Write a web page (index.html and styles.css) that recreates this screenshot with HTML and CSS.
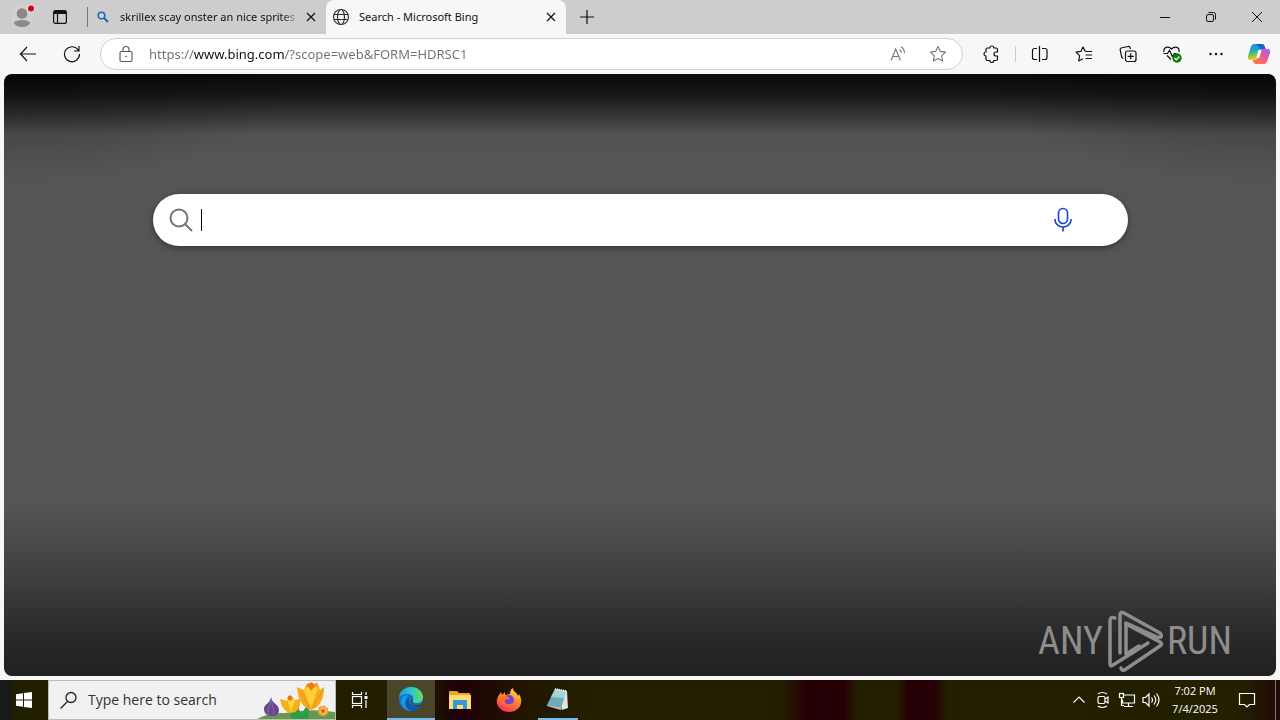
FILE: index.html
```html
<!DOCTYPE html>
<html lang="en">
<head>
<meta charset="utf-8">
<meta name="viewport" content="width=device-width, initial-scale=1">
<title>Search - Microsoft Bing</title>
<link rel="stylesheet" href="styles.css">
</head>
<body>
<div class="desktop">
  <header class="tabstrip">
    <button class="strip-btn profile" aria-label="Profile">
      <svg width="26" height="26" viewBox="0 0 26 26"><circle cx="13" cy="14" r="11" fill="#d3d1cf"/><circle cx="13" cy="10.500" r="5.300" fill="#8b8885"/><path d="M5 19q8-4 16 0c0 3-4 5-8 5s-8-2-8-5z" fill="#8b8885"/><circle cx="22" cy="5.500" r="4" fill="#e9dada"/><circle cx="22" cy="5.500" r="3" fill="#d0021b"/></svg>
    </button>
    <button class="strip-btn" aria-label="Tab actions">
      <svg width="16" height="16" viewBox="0 0 16 16" fill="none" stroke="#111" stroke-width="1.200"><rect x="1.600" y="1.600" width="12.800" height="12.800" rx="2"/><path d="M5.500 4.500v10"/><path d="M2 3.500h12" stroke-width="3"/></svg>
    </button>
    <span class="strip-sep"></span>
    <div class="tabs">
      <div class="tab">
        <svg class="tab-icon" width="16" height="16" viewBox="0 0 16 16" fill="none" stroke="#1769b5"><circle cx="6.500" cy="6.500" r="3.300" stroke-width="1.500"/><path d="M9 9l4 4" stroke-width="2"/></svg>
        <span class="tab-title fade">skrillex scay onster an nice sprites</span>
        <button class="tab-close" aria-label="Close tab"><svg width="10" height="10" viewBox="0 0 10 10" stroke="#111" stroke-width="1.200"><path d="M1 1l8 8M9 1l-8 8"/></svg></button>
      </div>
      <div class="tab active">
        <svg class="tab-icon" width="18" height="18" viewBox="0 0 18 18" fill="none" stroke="#333" stroke-width="1.200"><circle cx="9" cy="9" r="7.500"/><ellipse cx="9" cy="9" rx="3.500" ry="7.500"/><path d="M2 6.500h14M2 11.500h14"/></svg>
        <span class="tab-title">Search - Microsoft Bing</span>
        <button class="tab-close" aria-label="Close tab"><svg width="10" height="10" viewBox="0 0 10 10" stroke="#111" stroke-width="1.200"><path d="M1 1l8 8M9 1l-8 8"/></svg></button>
      </div>
    </div>
    <button class="new-tab" aria-label="New tab"><svg width="14" height="14" viewBox="0 0 14 14" stroke="#111" stroke-width="1.200"><path d="M7 0v14M0 7h14"/></svg></button>
    <div class="window-controls">
      <button aria-label="Minimize"><svg width="10" height="10" viewBox="0 0 10 10" stroke="#111"><path d="M0 5.500h10"/></svg></button>
      <button aria-label="Restore"><svg width="10" height="10" viewBox="0 0 10 10" fill="none" stroke="#111"><rect x=".5" y="2.500" width="7" height="7" rx="1.500"/><path d="M2.500 .5h5a2 2 0 0 1 2 2v5"/></svg></button>
      <button aria-label="Close"><svg width="10" height="10" viewBox="0 0 10 10" stroke="#111"><path d="M0 0l10 10M10 0L0 10"/></svg></button>
    </div>
  </header>

  <nav class="toolbar">
    <button class="tool" aria-label="Back"><svg width="18" height="18" viewBox="0 0 18 18" fill="none" stroke="#111" stroke-width="1.200"><path d="M8 2L1.500 9 8 16M1.500 9H17"/></svg></button>
    <button class="tool" aria-label="Refresh"><svg width="18" height="18" viewBox="0 0 18 18" fill="none" stroke="#111" stroke-width="1.200"><path d="M15.500 5.500A7.500 7.500 0 1 0 16.500 9M16 1v5h-5"/></svg></button>
    <div class="address">
      <svg width="16" height="18" viewBox="0 0 16 18" fill="none" stroke="#555" stroke-width="1.100"><rect x="2" y="6.500" width="12" height="10" rx="1.500"/><path d="M5 6.500V4.500a3 3 0 0 1 6 0v2"/><circle cx="8" cy="11.500" r=".8" fill="#555" stroke="none"/></svg>
      <input class="url" type="text" aria-label="Address bar" value="https://www.bing.com/?scope=web&amp;FORM=HDRSC1" spellcheck="false">
      <button aria-label="Read aloud"><svg width="18" height="18" viewBox="0 0 18 18" fill="none" stroke="#777" stroke-width="1.100"><path d="M2 15.500L6.700 4l4.800 11.500M3.600 11.500h6.300M10.500 4.500c1.200.8 1.800 2 1.800 3.500M12.200 1.800c2.300 1.500 3.300 3.700 3.200 6.500"/></svg></button>
      <button aria-label="Add to favorites"><svg width="18" height="18" viewBox="0 0 18 18" fill="none" stroke="#777" stroke-width="1.100" stroke-linejoin="round"><path d="M9 1.500l2.300 4.900 5.200.7-3.800 3.700.9 5.300L9 13.600l-4.600 2.500.9-5.300L1.500 7.100l5.200-.7z"/></svg></button>
    </div>
    <button class="tool" aria-label="Extensions"><svg width="18" height="18" viewBox="0 0 18 18" fill="none" stroke="#111" stroke-width="1.200" stroke-linejoin="round"><path d="M5.500 3h2.300a2 2 0 0 1 4 0H14q1.500 0 1.500 1.500V7H14a2 2 0 0 0 0 4h1.500v3q0 1.500-1.500 1.500h-2.200a2 2 0 0 1-4 0H5.500Q4 15.500 4 14v-3a2 2 0 0 1 0-4V4.500Q4 3 5.500 3z"/></svg></button>
    <span class="tool-sep"></span>
    <button class="tool" aria-label="Split screen"><svg width="18" height="18" viewBox="0 0 18 18" fill="none" stroke="#111" stroke-width="1.200"><path d="M8.500 1v16M6 3.500H3.500a2 2 0 0 0-2 2v7a2 2 0 0 0 2 2H6M11 3.500h3a2 2 0 0 1 2 2v7a2 2 0 0 1-2 2h-3"/></svg></button>
    <button class="tool" aria-label="Favorites"><svg width="18" height="18" viewBox="0 0 18 18" fill="none" stroke="#111" stroke-width="1.200" stroke-linejoin="round"><path d="M11 6.500L10 6 8 2 6 6.300l-5 .8 3.600 3.600-.9 5.300L8 13.700M11 6.500h6M10.500 10H17M10.500 13.500H17"/></svg></button>
    <button class="tool" aria-label="Collections"><svg width="18" height="18" viewBox="0 0 18 18" fill="none" stroke="#111" stroke-width="1.200" stroke-linejoin="round"><path d="M4.500 13.500Q3 13 2.500 11.500L1.200 4.800q-.3-1.500 1-1.800L9 1.500q1.500-.3 2 1l.5 1.500"/><rect x="6.500" y="6" width="10.500" height="10.500" rx="2"/><path d="M11.700 8.300v6M8.700 11.300h6"/></svg></button>
    <button class="tool" aria-label="Browser essentials"><svg width="20" height="20" viewBox="0 0 20 20" fill="none" stroke="#111" stroke-width="1.200" stroke-linejoin="round"><path d="M2 8C1 3 6.500 1.500 9.500 5 12.500 1.500 18 3 17 8M9 15.500l-4-4M1.500 9.500h4l2-3.300 3 6.500 1.800-3.200h2"/><circle cx="15" cy="14" r="4.700" fill="#107c10" stroke="none"/><path d="M12.500 14l1.800 1.800 3-3.300" stroke="#fff"/></svg></button>
    <button class="tool" aria-label="Settings and more"><svg width="16" height="16" viewBox="0 0 16 16" fill="#111"><circle cx="2.500" cy="8" r="1.200"/><circle cx="8" cy="8" r="1.200"/><circle cx="13.500" cy="8" r="1.200"/></svg></button>
    <button class="tool copilot" aria-label="Copilot"><svg width="24" height="24" viewBox="0 0 24 24">
      <defs><linearGradient id="cpA" x1="0" y1="0" x2=".2" y2="1"><stop offset="0" stop-color="#1687e8"/><stop offset=".45" stop-color="#26a9c7"/><stop offset=".75" stop-color="#8ac63f"/><stop offset="1" stop-color="#ffc928"/></linearGradient><linearGradient id="cpB" x1=".8" y1="0" x2=".2" y2="1"><stop offset="0" stop-color="#a35df1"/><stop offset=".5" stop-color="#ef5b91"/><stop offset="1" stop-color="#ff7a3c"/></linearGradient></defs>
      <path d="M7 2h8q2 0 2.500 2l1 3h-3q-2 0-2.500 2l-2 7q-.8 2-3 2H4q-4 0-3-4L4 4.500Q5 2 7 2z" fill="url(#cpA)"/><path d="M17 22H9q-2 0-2.500-2l-1-2H8q2 0 2.800-2l2.200-7q.6-2 2.500-2H20q4 0 3 4l-3 8.500Q19 22 17 22z" fill="url(#cpB)"/><path d="M9 2h6q2 0 2.500 2l1 3h-4q-2 0-2.500-2z" fill="#1762c9"/><path d="M11.500 8h3l-2.200 8h-3z" fill="#fff"/></svg></button>
  </nav>

  <main class="page">
    <form class="searchbox" role="search">
      <svg class="search-icon" width="26" height="26" viewBox="0 0 26 26" fill="none" stroke="#767676" stroke-width="2"><circle cx="11" cy="11" r="8.500"/><path d="M17 17l7 7"/></svg>
      <span class="caret"></span>
      <input type="text" aria-label="Enter your search term">
      <button type="button" class="mic" aria-label="Search using voice"><svg width="20" height="26" viewBox="0 0 20 26" fill="none" stroke="#2347d8" stroke-width="1.700"><rect x="5.500" y="1.500" width="9" height="15" rx="4.500"/><path d="M2 12v1a8 7 0 0 0 16 0v-1M10 20v4.500"/></svg></button>
    </form>
    <div class="watermark">
      <span>ANY</span>
      <svg width="58" height="64" viewBox="0 0 58 64" fill="none" stroke="currentColor" stroke-width="3.500" stroke-linecap="round" stroke-linejoin="round"><path d="M9 9Q4 7 4 12v43q0 3 3 1l35-22"/><path d="M14 44V6q0-4 4-2l36 20q2 2 1 4-2 1-4 0L20 14"/><path d="M20 15l34 18q3 2 0 4L20 60q-4 3-5-1"/><path d="M20 15v30l13-8"/></svg>
      <span>RUN</span>
    </div>
  </main>

  <footer class="taskbar">
    <button class="task" aria-label="Start"><svg width="16" height="16" viewBox="0 0 16 16" fill="#fff"><path d="M0 2.200L7 1.200v6.300H0zM8 1l8-1v7.500H8zM0 8.500h7v6.300l-7-1zM8 8.500h8V16l-8-1z"/></svg></button>
    <label class="task-search">
      <svg width="18" height="18" viewBox="0 0 18 18" fill="none" stroke="#222" stroke-width="1.300"><circle cx="11" cy="6.500" r="5"/><path d="M7.500 10.500l-7 7"/></svg>
      <input type="text" aria-label="Search Windows" placeholder="Type here to search">
      <svg class="flowers" width="78" height="38" viewBox="0 0 78 38">
        <path d="M0 38q12-7 28-6 26-5 50-1v7z" fill="#66994c"/><path d="M35 38l-4-12 7 7 2-11 4 12 9-15-2 19z" fill="#2f9d45"/>
        <path d="M14 16c1 7 8 7 8 13q0 6-7 6-8 0-8-7c0-5 6-5 7-12z" fill="#68458e"/><path d="M14 19c-1 7-4 9-3 15M15 20c0 7 3 9 1 14" stroke="#8d68ad" fill="none"/>
        <path d="M23 18l7 2 3-6 5 5 5-1q1 13-9 14-9-1-11-14z" fill="#f5b019"/><path d="M30 18l4 13 4-12-4-2z" fill="#ffd53f"/><circle cx="33" cy="17" r="2.500" fill="#ea7518"/>
        <path d="M40 6l7 3 3-7 6 3 4-4 3 8 4-3q0 19-13 23Q41 25 40 6z" fill="#f5ab1c"/><path d="M47 9l7 18 7-20-7-3z" fill="#ffd033"/><path d="M50 4l4 6 5-6-5-3z" fill="#ee7a19"/><path d="M44 11l8 16M65 10L56 27" stroke="#f28f12" fill="none"/>
        <circle cx="66" cy="30" r="4.500" fill="#f9bd56" stroke="#ea9c31" stroke-width="2" stroke-dasharray="3 1"/><circle cx="66" cy="30" r="2" fill="#d76618"/>
      </svg>
    </label>
    <button class="task" aria-label="Task View"><svg width="18" height="18" viewBox="0 0 18 18" fill="none" stroke="#fff" stroke-width="1.200"><rect x="1.500" y="5.500" width="9" height="7"/><path d="M1.500 1v2.500h9V1M1.500 17v-2.500h9V17M15 1v3M15 9v8"/><path d="M13.500 6.500h3" stroke-width="3"/></svg></button>
    <div class="apps">
      <button class="task open current" aria-label="Microsoft Edge"><svg width="26" height="26" viewBox="0 0 26 26">
        <defs><linearGradient id="egA"><stop offset="0" stop-color="#169be2"/><stop offset=".5" stop-color="#2dc5cf"/><stop offset="1" stop-color="#67df59"/></linearGradient></defs>
        <circle cx="13" cy="13" r="12" fill="#1470c8"/><path d="M1 12C1 5 7 1 13 1c7 0 12 5 12 10 0 4-3 6-6 6-4 0-5-1-4-3 1-3-1-6-6-6-4 0-7 2-8 4z" fill="url(#egA)"/><path d="M9 11c-4 6 0 14 8 13-6 3-13-1-14-8 0-4 3-7 7-7z" fill="#1699e6"/><path d="M11 12c-2 8 6 10 12 7-2 4-6 6-10 6-6-2-7-8-4-12z" fill="#0e58a5"/><path d="M15 14c-2 3 0 5 4 5 2 0 4-1 6-2l1 3c-5 1-13 0-13-4 0-2 1-3 2-2z" fill="#474321"/></svg></button>
      <button class="task" aria-label="File Explorer"><svg width="24" height="22" viewBox="0 0 24 22"><path d="M1 3q0-1 1-1h7l2 2h11v16H1z" fill="#e9a725"/><path d="M1 6h22v14H1z" fill="#ffdc73"/><path d="M5 12q0-1 1-1h12q1 0 1 1v8h-4v-4H9v4H5z" fill="#3898d3"/></svg></button>
      <button class="task" aria-label="Firefox"><svg width="26" height="26" viewBox="0 0 26 26">
        <defs><linearGradient id="ffA" x1=".8" y1="0" x2=".3" y2="1"><stop offset="0" stop-color="#ffe742"/><stop offset=".45" stop-color="#ff8b27"/><stop offset="1" stop-color="#f22d66"/></linearGradient></defs>
        <path d="M5 5l1 3 3-3v3l5-1c0-3 1-5 3-6 0 4 4 4 5 8l1-2c6 10-1 18-10 18C4 25-3 16 3 8z" fill="url(#ffA)"/><circle cx="13" cy="13" r="5" fill="#7043d4"/><path d="M6 9c5-1 5 1 8 2-2 2-6 1-5 4 1 3 6 3 8 0-1 6-10 6-12 0z" fill="#ff6a30"/></svg></button>
      <button class="task open narrow" aria-label="Notepad"><svg width="24" height="24" viewBox="0 0 24 24"><path d="M10 2l11 2 1 17-6 2z" fill="#e4e2d8"/><path d="M9 2l11 2-5 18-14-4z" fill="#6faabb"/><path d="M9 2l11 2-2 7-13-1z" fill="#a5d3dc"/><path d="M1 18l14 3v2L1 19z" fill="#c9c7bd"/><path d="M9 2l11 2" stroke="#eee" stroke-width="2" stroke-dasharray="1 1"/></svg></button>
    </div>
    <div class="tray">
      <button aria-label="Show hidden icons"><svg width="14" height="14" viewBox="0 0 14 14" fill="none" stroke="#fff" stroke-width="1.200"><path d="M1.500 9.500L7 4l5.500 5.500"/></svg></button>
      <button aria-label="Meet Now"><svg width="14" height="18" viewBox="0 0 14 18" fill="none" stroke="#fff" stroke-width="1.200"><rect x="2" y="5.500" width="7" height="7" rx="1.500"/><path d="M9 8l3-2v6l-3-2M2 3q4-3 9 0M2 15q4 3 9 0"/></svg></button>
      <button aria-label="Network"><svg width="18" height="16" viewBox="0 0 18 16" fill="none" stroke="#fff" stroke-width="1.200"><path d="M6 3h10.500v8H4.500V7.500M10.500 11v3M6 14.500h9"/><rect x="1.500" y="1.500" width="4" height="4"/><path d="M3.500 5.500v8H6"/></svg></button>
      <button aria-label="Volume"><svg width="18" height="16" viewBox="0 0 18 16" fill="none" stroke="#fff" stroke-width="1.200"><path d="M1 5.500h2.500L7 2v12l-3.500-3.500H1zM9.500 5.500q2 2.500 0 5M12 3.500q3.500 4.500 0 9M14.500 1.500q5 6.500 0 13"/></svg></button>
      <button class="clock"><span>7:02 PM</span><span>7/4/2025</span></button>
      <button class="notice" aria-label="Notifications"><svg width="18" height="18" viewBox="0 0 18 18" fill="none" stroke="#fff" stroke-width="1.200"><path d="M1.500 2.500h15v11h-5L9 16l-2.500-2.500h-5z"/></svg></button>
      <button class="show-desktop" aria-label="Show desktop"></button>
    </div>
  </footer>
</div>
</body>
</html>
```
FILE: styles.css
```css
* { box-sizing: border-box; }
body { margin: 0; font-family: "Open Sans", "Noto Sans", sans-serif; font-size: 12px; color: #111; }
button { border: 0; padding: 0; background: transparent; font: inherit; color: inherit; display: flex; align-items: center; justify-content: center; flex: none; }
input { border: 0; padding: 0; background: transparent; font: inherit; outline: 0; min-width: 0; }
svg { display: block; flex: none; }

.desktop { min-height: 100vh; display: flex; flex-direction: column; background: #f7f7f7; }

.tabstrip { display: flex; align-items: stretch; height: 34px; background: #cdcdcd; padding-left: 3px; }
.strip-btn { width: 38px; }
.profile svg { margin-bottom: 2px; }
.strip-sep { width: 1px; height: 20px; margin: 7px 0 0 8px; background: #777; }
.tabs { display: flex; }
.tab { display: flex; align-items: center; width: 238px; padding: 0 7px; }
.tab.active { width: 240px; padding-left: 6px; background: #f7f7f7; border-radius: 8px 8px 0 0; }
.tab-icon { margin-right: 9px; }
.tab-title { flex: 1; min-width: 0; overflow: hidden; white-space: nowrap; font-family: "Noto Sans", sans-serif; font-size: 11px; line-height: 20px; }
.fade { mask-image: linear-gradient(90deg, #000 90%, transparent); }
.tab-close { width: 16px; height: 16px; margin-left: 3px; }
.new-tab { width: 42px; }
.window-controls { display: flex; margin-left: auto; }
.window-controls button { width: 46px; }

.toolbar { display: flex; align-items: center; height: 40px; padding-left: 6px; }
.tool { width: 44px; height: 36px; }
.copilot { width: 42px; }
.tool-sep { width: 1px; height: 16px; margin: 0 2px; background: #ccc; }
.address { flex: 1; min-width: 0; display: flex; align-items: center; height: 32px; margin: 0 6px; padding: 0 4px 0 17px; background: #fff; border: 1px solid #d0d0d0; border-radius: 16px; }
.address button { width: 40px; height: 28px; }
.url { flex: 1; margin-left: 15px; font-family: "Noto Sans", sans-serif; font-size: 13px; line-height: 20px; color: transparent; caret-color: #111; background: linear-gradient(90deg, #707070 45px, #111 45px, #111 135px, #707070 135px); background-clip: text; -webkit-background-clip: text; }

.page { position: relative; flex: 1; margin: 0 4px 4px; padding: 120px 148px 0 149px; border-radius: 8px; background: radial-gradient(ellipse 300px 110px at 0 0, rgba(0, 0, 0, 0.3), transparent), radial-gradient(ellipse 300px 110px at 100% 0, rgba(0, 0, 0, 0.3), transparent), linear-gradient(#090909, #161616 20px, #363636 42px, #525252 60px, #555 80px, #555 430px, #3d3d3d 510px, #282828 565px, #212121); }
.searchbox { display: flex; align-items: center; height: 52px; padding: 0 55px 0 15px; border-radius: 26px; background: #fff; box-shadow: 0 2px 6px rgba(0, 0, 0, 0.4); }
.caret { width: 1px; height: 22px; margin-left: 7px; background: #000; }
.searchbox input { flex: 1; font-size: 18px; }
.watermark { position: absolute; right: 44px; bottom: 3px; display: flex; align-items: center; gap: 3px; color: #8d8d8d; font-family: "Roboto Condensed", "Liberation Sans Narrow", sans-serif; font-size: 38px; line-height: 64px; }

.taskbar { display: flex; height: 40px; color: #fff; background: linear-gradient(90deg, #191919 8px, #221f00 16px, #221f00 30%, #1c1100 34%, #20000a 36%, #211500 41%, #232000 46%, #232000 61%, #260006 63%, #260006 66%, #232000 67%, #232000 70%, #260006 71%, #260006 73%, #232000 74%, #232000 97%, #220808); }
.task { position: relative; width: 48px; height: 40px; }
.task-search { display: flex; align-items: center; width: 288px; padding-left: 11px; background: #f1f1f1; border: 1px solid #bbb; }
.task-search input { flex: 1; margin-left: 10px; font-size: 14px; line-height: 20px; color: #333; }
.task-search input::placeholder { color: #333; opacity: 1; }
.flowers { align-self: flex-end; }
.apps { display: flex; gap: 1px; margin-left: 3px; }
.current { background: #4a462a; }
.open { border-bottom: 2px solid #76b9ed; }
.narrow { width: 40px; margin-left: 4px; }
.tray { display: flex; margin-left: auto; }
.tray button { width: 24px; }
.tray .clock { width: 64px; flex-direction: column; font-size: 11px; line-height: 18px; white-space: nowrap; }
.tray .notice { width: 40px; }
.tray .show-desktop { width: 5px; margin-left: 8px; border-left: 1px solid #777; }
```
